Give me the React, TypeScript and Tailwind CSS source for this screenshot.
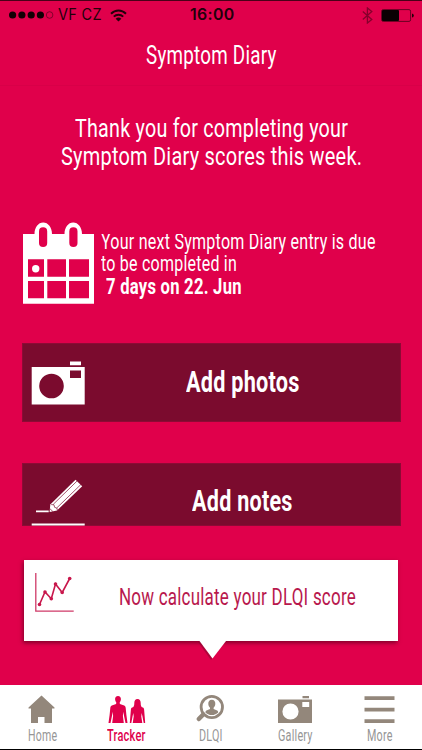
import { useLayoutEffect, useRef, useState } from "react";
import type { ReactNode } from "react";
import clsx from "clsx";

// Condenses a line of text horizontally so that it fills the given width
function Condensed({
  width,
  className,
  children,
}: {
  width: number;
  className?: string;
  children: ReactNode;
}) {
  const ref = useRef<HTMLSpanElement>(null);
  const [scale, setScale] = useState(0.8);

  useLayoutEffect(() => {
    if (ref.current) setScale(width / ref.current.offsetWidth);
  }, [width]);

  return (
    <span className={clsx("block", className)} style={{ width }}>
      <span
        ref={ref}
        className="inline-block origin-left whitespace-nowrap align-top"
        style={{ transform: `scaleX(${scale})` }}
      >
        {children}
      </span>
    </span>
  );
}

function StatusBar() {
  return (
    <div className="grid h-[29px] shrink-0 grid-cols-[1fr_auto_1fr] items-center border-t border-[#4a0018] pl-[9px] pr-2 font-['Inter',sans-serif] text-[15.5px] leading-[28px] text-[#22000a]">
      <div className="flex items-center">
        <svg width="45" height="8" viewBox="0 0 45 8" fill="#120005">
          <circle cx="3.6" cy="4" r="3.6" />
          <circle cx="12.9" cy="4" r="3.6" />
          <circle cx="22.2" cy="4" r="3.6" />
          <circle cx="31.4" cy="4" r="3.6" />
          <circle cx="40.6" cy="4" r="3.3" fill="none" stroke="#5c0020" strokeWidth="0.7" />
        </svg>
        <Condensed width={44} className="ml-[3.5px]">
          VF CZ
        </Condensed>
        <svg className="ml-2" width="17" height="13" viewBox="0 0 17 13" fill="none" stroke="#22000a" strokeWidth="2">
          <path d="M1 4.7C5.2 .4 11.8 .4 16 4.7" />
          <path d="M3.8 7.6C6.4 5 10.6 5 13.2 7.6" />
          <path d="M8.5 12.6 5.6 9.7Q8.5 7.2 11.4 9.7Z" fill="#22000a" stroke="none" />
        </svg>
      </div>
      <Condensed width={44} className="font-semibold">
        16:00
      </Condensed>
      <div className="flex items-center justify-end">
        <svg width="11" height="17" viewBox="0 0 11 17" fill="none" stroke="#85002c" strokeWidth="1.3">
          <path d="M.8 4.4 9.8 12.4 5.4 16V1L9.8 4.6.8 12.6" />
        </svg>
        <svg className="ml-2" width="33" height="13" viewBox="0 0 33 13">
          <rect x=".6" y=".6" width="29" height="11.8" rx="1.6" fill="none" stroke="#4a0018" strokeWidth=".8" />
          <rect x="1" y="1" width="17" height="11" rx="1" fill="#0a0003" />
          <path d="M31 4.4q1.8.3 1.8 2.1T31 8.6Z" fill="#22000a" />
        </svg>
      </div>
    </div>
  );
}

function CalendarIcon() {
  return (
    <svg width="71" height="82" viewBox="23 222 71 82" className="shrink-0">
      <path
        fill="#fff"
        d="M23 234h11.500c0-6.500 3.800-11.400 8.700-11.400s8.800 4.900 8.800 11.400h12.500c0-6.500 3.800-11.400 8.700-11.400s8.800 4.900 8.800 11.400h12v69.700H23z"
      />
      <g fill="#e0004b">
        <rect x="39" y="227.300" width="8.200" height="19.700" rx="4.100" />
        <rect x="69.300" y="227.300" width="8.200" height="19.700" rx="4.100" />
        <path d="M28 259.300h16v17.500H28zM47.300 259.300h18.700v17.500H47.300zM69 259.300h20v17.500H69zM28 281h16v17.300H28zM47.300 281h18.700v17.300H47.300zM69 281h20v17.300H69z" />
      </g>
      <circle cx="35.700" cy="268.800" r="3.700" fill="#fff" />
    </svg>
  );
}

function PencilIcon() {
  return (
    <svg width="54" height="48" viewBox="31 479 54 48" className="mt-[15px]">
      <path fill="#fff" d="M31.700 523.600h53v1.900h-53zM36 510.600h12.700v1.700H36z" />
      <path fill="#fff" d="M49.600 512 50.300 504.500 75.500 479.700 82.200 486.300 57 510.500Z" />
      <g stroke="#7b0b2e" strokeWidth=".7" fill="none">
        <path d="M53.300 504.300 77.500 480.600M56.700 508 80.900 484.500M51.200 504.600 54 504.800 54.600 507.300 57 508.200 57.300 510" />
      </g>
      <path d="M50 508.800 52.800 511.400" stroke="#7b0b2e" strokeWidth=".7" />
    </svg>
  );
}

function ChartIcon() {
  return (
    <svg width="40" height="40" viewBox="35 574 40 40">
      <path d="M35.800 574v38.200h37.900" fill="none" stroke="#cf3a68" strokeWidth="1.300" />
      <path
        d="m39.500 605.500 5.500-12.500 6.300 6.700 4.200-14.700 6.700 8.500 7.500-14"
        fill="none"
        stroke="#c8174c"
        strokeWidth="1.600"
      />
      <g fill="#c8174c">
        <circle cx="39.500" cy="605.500" r="1.800" />
        <circle cx="45" cy="593" r="1.800" />
        <circle cx="51.300" cy="599.700" r="1.800" />
        <circle cx="55.500" cy="585" r="1.800" />
        <circle cx="62.200" cy="593.500" r="1.800" />
        <circle cx="69.700" cy="579.500" r="1.800" />
      </g>
    </svg>
  );
}

const tabs = [
  {
    name: "Home",
    width: 29,
    viewBox: "24 694 36 30",
    icon: (
      <path d="M41.500 695.500 54.500 707.500V708.500H52V723H44.500V717H38V723H31V708.500H28.500V707.500Z" />
    ),
  },
  {
    name: "Tracker",
    width: 38.5,
    viewBox: "108 694 36 30",
    active: true,
    icon: (
      <>
        <path d="M117 696c2 0 3 1.400 2.900 3.200-.1 1.500-.6 2.500-1.200 3.200l.2 1.500 4.300 1.600c1 .4 1.400 1.400 1.500 2.600l.7 6.900 1.100 8h-2l-1.500-7.300-.7-4-.4 4.300.9 7h-11.600l.9-7-.4-4.300-.7 4-1.500 7.300h-2l1.100-8 .7-6.900c.1-1.200.5-2.200 1.500-2.600l4.300-1.600.2-1.500c-.6-.7-1.100-1.700-1.200-3.200-.1-1.800.9-3.200 2.900-3.200Z" />
        <path d="M136.500 699c2.300 0 3.200 1.800 3.200 3.900 0 1.600.2 2.800.9 4l1.200.6c.9.400 1.200 1.200 1.300 2.100l.5 5.900.6 7.500h-1.500l-1.300-6.800-.7-3.200-.4 3.500 1 6.500h-9.600l1-6.500-.4-3.500-.7 3.200-1.300 6.800h-1.500l.6-7.500.5-5.900c.1-.9.4-1.700 1.300-2.100l1.200-.6c.7-1.200.9-2.400.9-4 0-2.100.9-3.900 3.200-3.900Z" />
      </>
    ),
  },
  {
    name: "DLQI",
    width: 23.5,
    viewBox: "193 694 36 30",
    icon: (
      <>
        <circle cx="211.800" cy="707" r="10.700" fill="none" stroke="currentColor" strokeWidth="2.800" />
        <path d="m203.200 714.500-4.400 4.500" stroke="currentColor" strokeWidth="4.500" strokeLinecap="round" />
        <path d="M211.800 699.700c2.400 0 3.700 1.800 3.500 4.200-.1 1.800-.9 3-1.700 3.800v1.300l3.600 1.500c.7.400 1 1 1 1.900-1.500 1.500-3.800 2.600-6.400 2.600s-4.900-1.100-6.400-2.600c0-.9.300-1.500 1-1.900l3.600-1.500v-1.300c-.8-.8-1.600-2-1.700-3.800-.2-2.400 1.100-4.200 3.500-4.200Z" />
      </>
    ),
  },
  {
    name: "Gallery",
    width: 34.5,
    viewBox: "277 694 36 30",
    icon: (
      <path
        fillRule="evenodd"
        d="M302.500 696h6.500v2.300h-6.500zM278 699.500h34V723h-34zM282.400 711.500a8.100 8.100 0 1 0 16.200 0a8.100 8.100 0 1 0-16.200 0M302.300 702v5h6.900v-5z"
      />
    ),
  },
  {
    name: "More",
    width: 25.5,
    viewBox: "361.500 694 36 30",
    icon: <path d="M364 696.200h30v3.700h-30zM364 707.800h30v3.600h-30zM364 719.200h30v3.700h-30z" />,
  },
];

function TabBar() {
  return (
    <nav className="grid h-[65.5px] shrink-0 grid-cols-5 border-b border-black bg-white pt-[9.5px]">
      {tabs.map((tab) => (
        <div
          key={tab.name}
          className={clsx("flex flex-col items-center", tab.active ? "text-[#e0004b]" : "text-[#93877b]")}
        >
          <svg width="36" height="30" viewBox={tab.viewBox} fill="currentColor" className="overflow-visible">
            {tab.icon}
          </svg>
          <Condensed
            width={tab.width}
            className={clsx(
              "mt-[3.5px] text-[16px] leading-[16px] tracking-[0.02em]",
              tab.active ? "font-medium" : "text-[#969696]"
            )}
          >
            {tab.name}
          </Condensed>
        </div>
      ))}
    </nav>
  );
}

export default function App() {
  return (
    <div className="flex h-[750px] w-[422px] flex-col overflow-hidden bg-[#e0004b] font-['Roboto',sans-serif] tracking-[0.02em] text-white">
      <StatusBar />
      <header className="flex h-[57px] shrink-0 justify-center border-b border-[#d80048] pt-[10.5px] text-[26px] leading-[30px]">
        <Condensed width={131}>Symptom Diary</Condensed>
      </header>

      <main className="flex grow flex-col">
        <div className="mt-[28px] flex flex-col items-center text-[26.5px] leading-[28px]">
          <Condensed width={273}>Thank you for completing your</Condensed>
          <Condensed width={301}>Symptom Diary scores this week.</Condensed>
        </div>

        <div className="ml-[23px] mt-[51.75px] flex">
          <CalendarIcon />
          <div className="ml-[7px] mt-[12px] h-[70px] overflow-hidden text-[21.5px] leading-[22.5px]">
            <div className="-mt-[3px]">
              <Condensed width={274.5}>Your next Symptom Diary entry is due</Condensed>
              <Condensed width={136}>to be completed in</Condensed>
              <Condensed width={136} className="ml-[5px] font-bold">
                7 days on 22. Jun
              </Condensed>
            </div>
          </div>
        </div>

        <button className="ml-[22px] mt-[39px] flex h-[79px] w-[378.5px] border border-[#8d0a35] bg-[#7b0b2e] pl-[8px] text-[29px] font-bold">
          <svg width="54" height="44" viewBox="31 361 54 44" className="mt-[17px]">
            <path
              fill="#fff"
              fillRule="evenodd"
              d="M70 361.500h11v3.700H70zM31.700 367h53v37.500h-53zM39.200 386a12.300 12.300 0 1 0 24.600 0a12.300 12.300 0 1 0-24.600 0M70 370.500v7.500h11v-7.500z"
            />
          </svg>
          <Condensed width={113.5} className="ml-[101px] mt-[20px] leading-[36px]">
            Add photos
          </Condensed>
        </button>

        <button className="ml-[22px] mt-[41px] flex h-[63px] w-[378.5px] border border-[#8d0a35] bg-[#7b0b2e] pl-[8px] text-[29px] font-bold">
          <PencilIcon />
          <Condensed width={100.5} className="ml-[107px] mt-[19px] leading-[36px]">
            Add notes
          </Condensed>
        </button>

        <div className="relative ml-[24px] mt-[34px] flex h-[81px] w-[374px] bg-white pl-[11px] pt-[13.5px] text-[#b8184d] shadow-[-1px_2px_4px_rgba(90,0,30,0.7)]">
          <ChartIcon />
          <Condensed width={237} className="ml-[44px] mt-[8.5px] text-[24.5px] leading-[30px]">
            Now calculate your DLQI score
          </Condensed>
          <svg
            className="absolute left-[175px] top-[80px] overflow-visible"
            width="27"
            height="19"
            viewBox="0 0 27 19"
          >
            <path d="M-1 2 12 20 13.500 18 2 1Z" fill="#8d0630" opacity=".6" />
            <path d="M0 0H27V1L13.500 18.500 0.500 1Z" fill="#fff" />
          </svg>
        </div>
      </main>

      <TabBar />
    </div>
  );
}
